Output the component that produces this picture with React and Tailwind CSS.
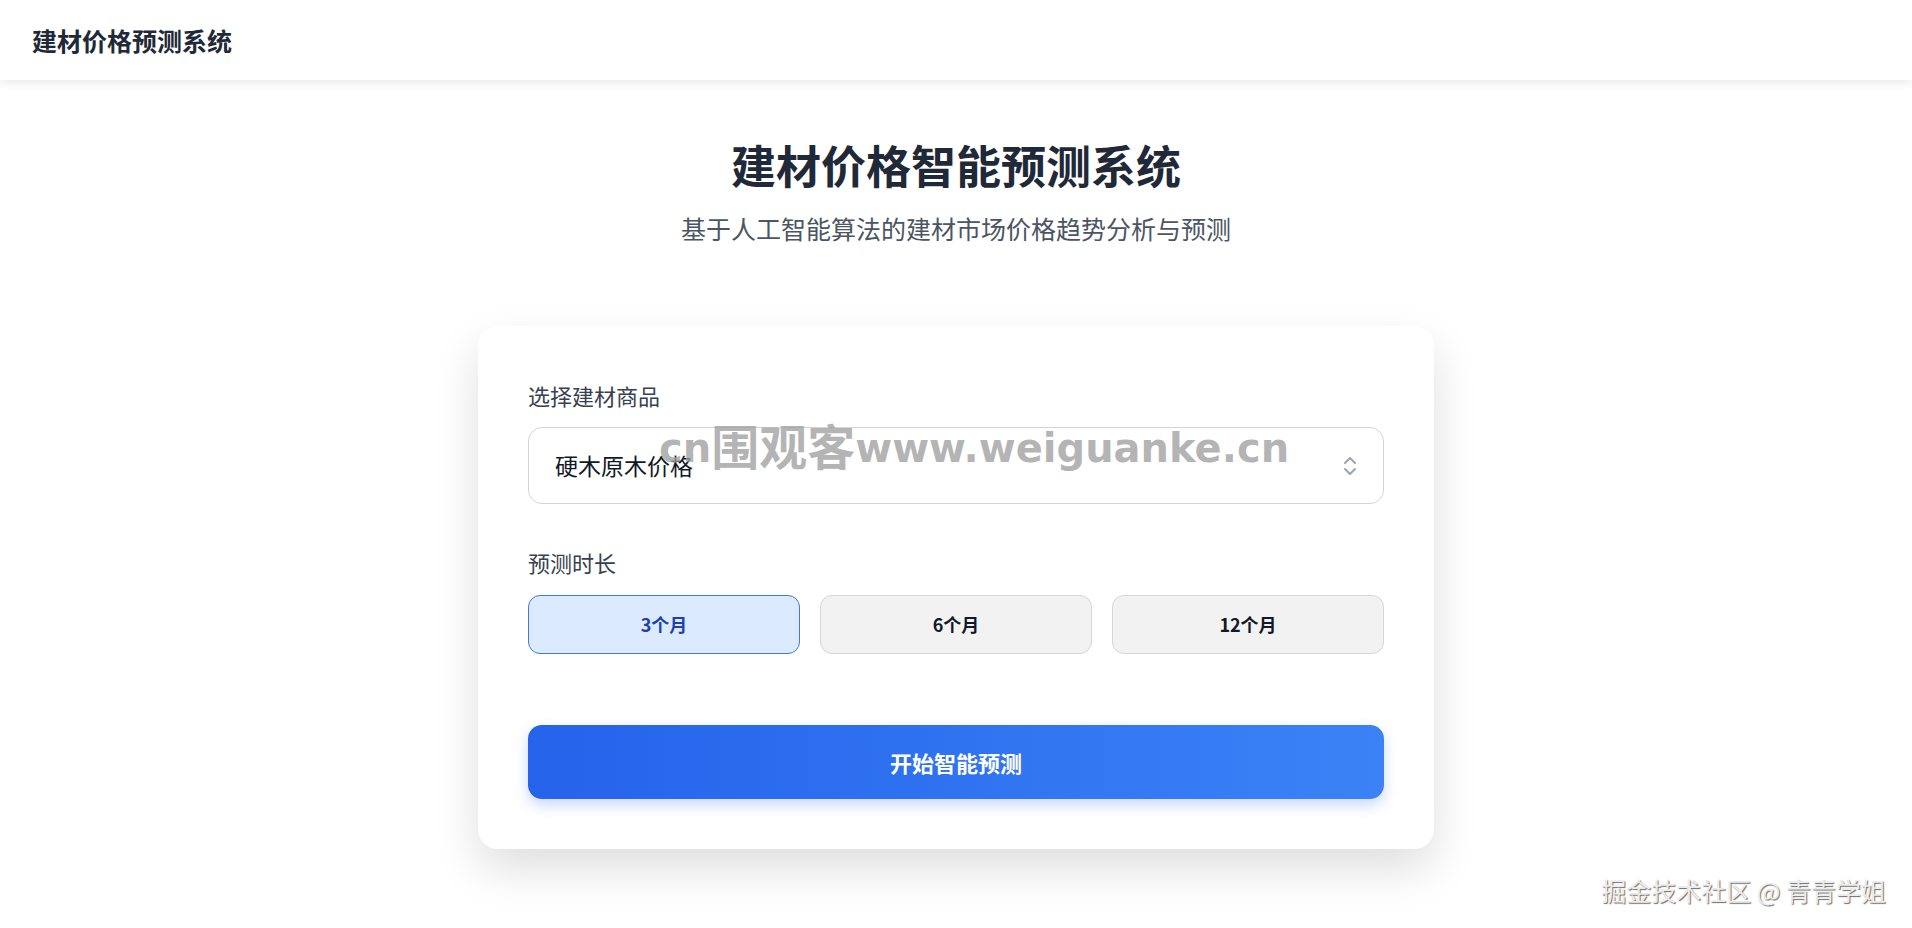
import React from "react";

const CJK = { fontFamily: '"Noto Sans CJK SC", "Noto Sans", sans-serif' };

function Chevrons() {
  return (
    <svg width="14" height="22" viewBox="0 0 14 22" fill="none" stroke="#9ca3af" strokeWidth="2" strokeLinecap="round" strokeLinejoin="round">
      <path d="M2 8 L7 3 L12 8" />
      <path d="M2 14 L7 19 L12 14" />
    </svg>
  );
}

export default function App() {
  return (
    <div className="min-h-[928px] bg-white relative overflow-hidden" style={CJK}>
      <header className="h-[80px] bg-white shadow-[0_2px_10px_rgba(0,0,0,0.1)] flex items-center px-[32px] relative z-10">
        <h1 className="text-[25px] font-bold text-[#1f2937] leading-none">建材价格预测系统</h1>
      </header>

      <main className="flex flex-col items-center">
        <h2 className="mt-[58px] text-[45px] font-bold text-[#1f2937] leading-[54px]">建材价格智能预测系统</h2>
        <p className="mt-[20px] text-[25px] text-[#4b5563] leading-[32px]">基于人工智能算法的建材市场价格趋势分析与预测</p>

        <div className="mt-[82px] w-[956px] bg-white rounded-[20px] shadow-[0_20px_45px_rgba(0,0,0,0.13)] px-[50px] pt-[54px] pb-[50px] relative">
          <label className="block text-[22px] leading-[30px] text-[#374151]">选择建材商品</label>
          <div className="mt-[17px] h-[77px] border border-[#d4d4d4] rounded-[14px] flex items-center justify-between pl-[26px] pr-[26px]">
            <span className="text-[23px] text-[#111827]">硬木原木价格</span>
            <Chevrons />
          </div>

          <label className="block mt-[43px] text-[22px] leading-[30px] text-[#374151]">预测时长</label>
          <div className="mt-[18px] grid grid-cols-3 gap-[20px]">
            <button className="h-[59px] rounded-[12px] border border-[#3f7bd0] bg-[#dbeafe] text-[#1e40af] font-bold text-[18px]">3个月</button>
            <button className="h-[59px] rounded-[12px] border border-[#d6d6d6] bg-[#f2f2f2] text-[#111827] font-bold text-[18px]">6个月</button>
            <button className="h-[59px] rounded-[12px] border border-[#d6d6d6] bg-[#f2f2f2] text-[#111827] font-bold text-[18px]">12个月</button>
          </div>

          <button className="mt-[71px] w-full h-[74px] rounded-[14px] bg-gradient-to-r from-[#2563eb] to-[#3b82f6] text-white font-bold text-[22px] shadow-[0_6px_14px_rgba(37,99,235,0.25)]">
            开始智能预测
          </button>

          <div
            aria-hidden="true"
            className="absolute left-[181px] top-[97px] h-[50px] flex items-center font-bold text-[rgba(160,160,160,0.78)] leading-none whitespace-nowrap pointer-events-none"
            style={{ fontFamily: '"DejaVu Sans", "Noto Sans CJK SC", sans-serif' }}
          >
            <span className="text-[40px]">cn</span>
            <span className="text-[48px]">围观客</span>
            <span className="text-[40px]">www.weiguanke.cn</span>
          </div>
        </div>
      </main>

      <div className="absolute right-[26px] top-[876px] text-[25px] leading-[28px] text-[#ececec] [text-shadow:1px_1px_1px_#6b6b6b]">
        掘金技术社区 @ 青青学姐
      </div>
    </div>
  );
}
